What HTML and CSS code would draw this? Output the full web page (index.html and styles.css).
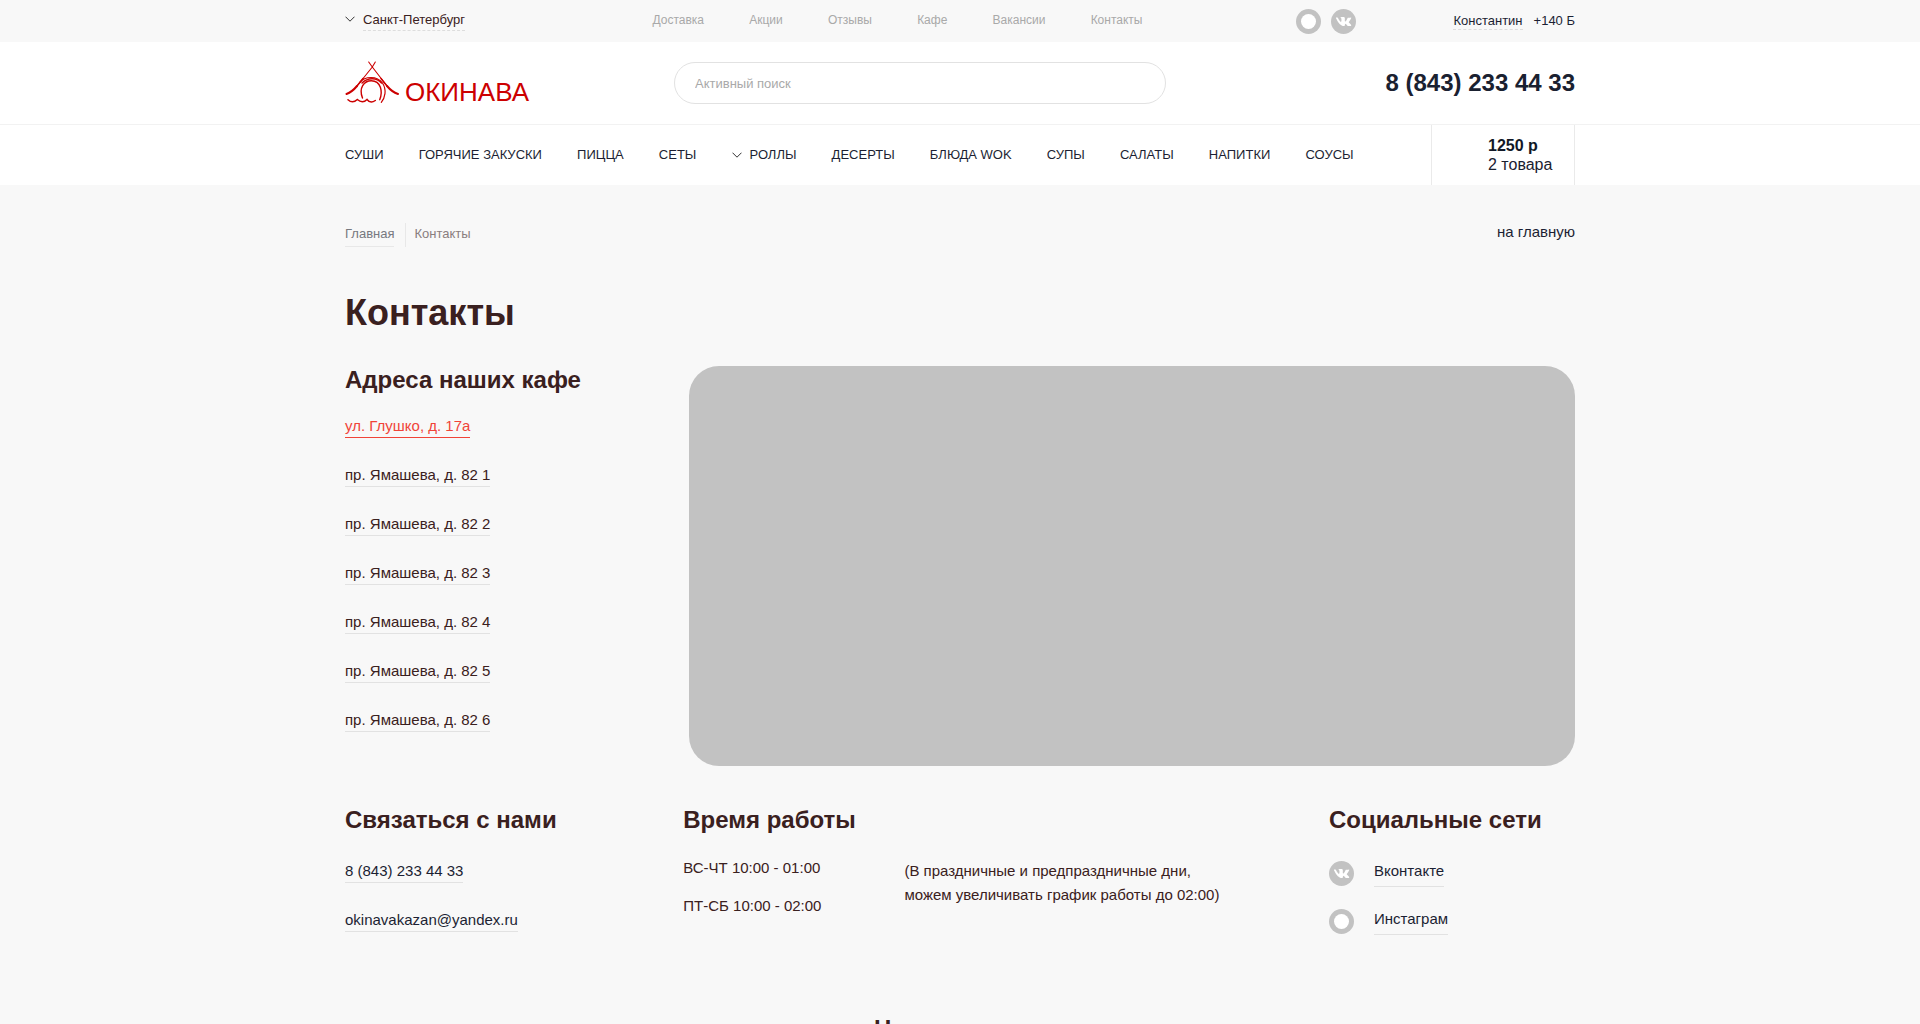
FILE: index.html
```html
<!DOCTYPE html>
<html lang="ru">
<head>
<meta charset="utf-8">
<meta name="viewport" content="width=device-width, initial-scale=1">
<title>Контакты</title>
<link rel="stylesheet" href="styles.css">
</head>
<body>
<svg class="sprite" aria-hidden="true">
  <symbol id="chevron" viewBox="0 0 10 6"><path d="M.5.7 5 5.200 9.500.7" fill="none" stroke="#333" stroke-width="1"/></symbol>
  <symbol id="ring" viewBox="0 0 25 25"><circle cx="12.500" cy="12.500" r="12.500" fill="#c2c2c2"/><circle cx="12.500" cy="12.500" r="7.500" fill="#fff"/></symbol>
  <symbol id="vk" viewBox="0 0 25 25"><circle cx="12.500" cy="12.500" r="12.500" fill="#c2c2c2"/><path transform="translate(5 8) scale(.625)" fill="#fff" d="M11.700 14.400h1.500s.4 0 .7-.4c.2-.2.2-.7.2-.7s0-2 .9-2.300c.9-.3 2.100 2 3.300 2.800.9.7 1.700.5 1.700.5l3.300 0s1.700-.1.9-1.500c-.1-.1-.5-1-2.400-2.800-2.100-1.900-1.800-1.600.7-4.900C24 3.100 24.600 1.900 24.400 1.300c-.2-.5-1.300-.3-1.300-.3l-3.700 0s-.3 0-.5.1c-.2.100-.3.4-.3.4s-.6 1.600-1.400 2.900c-1.600 2.800-2.300 2.900-2.600 2.800-.6-.4-.5-1.700-.5-2.600 0-2.900.4-4.100-.9-4.400C12.800.1 12.500 0 11.300 0 9.700 0 8.400 0 7.600.4c-.5.3-.9.8-.6.8.3 0 .9.200 1.300.6.4.6.4 1.900.4 1.900s.3 3.600-.6 4c-.6.4-1.500-.3-3.300-3.200C3.900 3 3.200 1.500 3.200 1.500S3 1.200 2.800 1C2.600.9 2.200.8 2.200.8H.6S.1.800-.1 1c-.2.200 0 .6 0 .6s2.800 6.300 5.900 9.500c2.900 2.900 5.900 3.300 5.900 3.300z"/></symbol>
</svg>

<header>
  <div class="topbar container">
    <button class="city" type="button"><svg class="chevron"><use href="#chevron"/></svg><span>Санкт-Петербург</span></button>
    <nav class="top-nav" aria-label="Информация">
      <a href="#">Доставка</a><a href="#">Акции</a><a href="#">Отзывы</a><a href="#">Кафе</a><a href="#">Вакансии</a><a href="#">Контакты</a>
    </nav>
    <div class="top-social">
      <a href="#" aria-label="Инстаграм"><svg class="round"><use href="#ring"/></svg></a>
      <a href="#" aria-label="Вконтакте"><svg class="round"><use href="#vk"/></svg></a>
    </div>
    <div class="user"><a href="#">Константин</a><span>+140 Б</span></div>
  </div>

  <div class="brand-row">
    <div class="container brand">
      <a class="logo" href="#">
        <svg viewBox="0 0 54 44" class="roof" aria-hidden="true">
          <g fill="none" stroke="#c00" stroke-linecap="round">
            <path d="M23.700 1 27.300 6 42 25M30.300 1 27.300 6 12 25" stroke-width="1.100"/>
            <path d="M36 17.500 42 25M18 17.500 12 25" stroke-width="1.500"/>
            <path d="M42 25Q47 31 53 33M12 25Q7 31 1.500 33" stroke-width="2"/>
            <path d="M14.700 21.500C20 15 32 14.500 37.500 22 42 29 40 37 36.300 41.300" stroke-width="1.200"/>
            <path d="M17 22C23 16 32 16.500 36.500 22" stroke-width="1.500"/>
            <path d="M17.500 37C13.500 27 19 19.700 26.300 19.700 36 19.700 38 31 34.700 38.700" stroke-width="1.400"/>
            <path d="M3 38.700Q7.500 43 12.300 38.500 17.500 43 22 38.500 25.500 43 30.300 39.500" stroke-width="1.500"/>
          </g>
        </svg>
        <span>ОКИНАВА</span>
      </a>
      <form class="search" role="search"><input type="search" placeholder="Активный поиск" aria-label="Активный поиск"></form>
      <a class="phone" href="tel:88432334433">8 (843) 233 44 33</a>
    </div>
  </div>

  <div class="menu-row">
    <div class="container menu-inner">
      <nav class="menu" aria-label="Меню">
        <a href="#">СУШИ</a><a href="#">ГОРЯЧИЕ ЗАКУСКИ</a><a href="#">ПИЦЦА</a><a href="#">СЕТЫ</a><a class="has-sub" href="#"><svg class="chevron"><use href="#chevron"/></svg>РОЛЛЫ</a><a href="#">ДЕСЕРТЫ</a><a href="#">БЛЮДА WOK</a><a href="#">СУПЫ</a><a href="#">САЛАТЫ</a><a href="#">НАПИТКИ</a><a href="#">СОУСЫ</a>
      </nav>
      <a class="cart" href="#"><b>1250 р</b><span>2 товара</span></a>
    </div>
  </div>
</header>

<main class="container">
  <div class="crumbs-row">
    <nav class="crumbs" aria-label="Навигация"><a href="#">Главная</a><span>Контакты</span></nav>
    <a class="home" href="#">на главную</a>
  </div>
  <h1>Контакты</h1>

  <section class="places">
    <div>
      <h2>Адреса наших кафе</h2>
      <ul class="links">
        <li><a class="active" href="#">ул. Глушко, д. 17а</a></li>
        <li><a href="#">пр. Ямашева, д. 82 1</a></li>
        <li><a href="#">пр. Ямашева, д. 82 2</a></li>
        <li><a href="#">пр. Ямашева, д. 82 3</a></li>
        <li><a href="#">пр. Ямашева, д. 82 4</a></li>
        <li><a href="#">пр. Ямашева, д. 82 5</a></li>
        <li><a href="#">пр. Ямашева, д. 82 6</a></li>
      </ul>
    </div>
    <div class="map"></div>
  </section>

  <section class="info">
    <div>
      <h2>Связаться с нами</h2>
      <ul class="links navy">
        <li><a href="tel:88432334433">8 (843) 233 44 33</a></li>
        <li><a href="mailto:okinavakazan@yandex.ru">okinavakazan@yandex.ru</a></li>
      </ul>
    </div>
    <div>
      <h2>Время работы</h2>
      <div class="hours">
        <div class="times"><p>ВС-ЧТ 10:00 - 01:00</p><p>ПТ-СБ 10:00 - 02:00</p></div>
        <p class="note">(В праздничные и предпраздничные дни,<br>можем увеличивать график работы до 02:00)</p>
      </div>
    </div>
    <div>
      <h2>Социальные сети</h2>
      <ul class="social">
        <li><svg class="round"><use href="#vk"/></svg><a href="#">Вконтакте</a></li>
        <li><svg class="round"><use href="#ring"/></svg><a href="#">Инстаграм</a></li>
      </ul>
    </div>
  </section>

  <h2 class="feedback">Напишите нам</h2>
</main>
</body>
</html>
```
FILE: styles.css
```css
*, *::before, *::after { box-sizing: border-box; }

body {
  margin: 0;
  background: #f8f8f8;
  color: #3a2020;
  font: 15px/20px "Liberation Sans", Arial, sans-serif;
}

a { color: inherit; text-decoration: none; }
h1, h2, p, ul { margin: 0; padding: 0; }
ul { list-style: none; }
button, input { font: inherit; color: inherit; }

.sprite { position: absolute; width: 0; height: 0; }
.container { width: 100%; max-width: 1230px; margin: 0 auto; }
.chevron { width: 10px; height: 6px; flex: none; }
.round { display: block; width: 25px; height: 25px; flex: none; }

/* Top bar */
.topbar {
  display: grid;
  grid-template-columns: 25% 40% 1fr auto;
  align-items: center;
  height: 42px;
  font-size: 13px;
}
.city {
  display: flex;
  align-items: center;
  justify-self: start;
  gap: 8px;
  padding: 0 0 1px;
  border: 0;
  background: none;
}
.city span { line-height: 20px; border-bottom: 1px dashed #ddd; }
.city .chevron { margin-bottom: 3px; }
.top-nav {
  display: flex;
  justify-content: space-between;
  padding: 0 2px 2px 0;
  color: #a9a9a9;
  font-size: 12px;
}
.top-social { display: flex; gap: 10px; padding-left: 151px; }
.user { display: flex; align-items: center; gap: 11px; color: #1c1f33; }
.user a { line-height: 16px; border-bottom: 1px dashed #ddd; }

/* Logo, search, phone */
.brand-row { background: #fff; border-bottom: 1px solid #f2f2f2; }
.brand {
  display: flex;
  align-items: center;
  height: 82px;
}
.logo {
  display: flex;
  align-items: flex-end;
  gap: 6px;
  width: 329px;
  color: #c00;
  font-size: 26px;
}
.logo span { line-height: 26px; }
.roof { width: 54px; height: 44px; }
.search { width: 40%; }
.search input {
  display: block;
  width: 100%;
  height: 42px;
  padding: 0 20px;
  border: 1px solid #e2e2e2;
  border-radius: 21px;
  background: #fff;
  font-size: 13px;
  outline: 0;
  appearance: none;
}
.search input::placeholder { color: #a9a9a9; opacity: 1; }
.phone {
  margin-left: auto;
  color: #1a2130;
  font-size: 24px;
  font-weight: bold;
}

/* Menu */
.menu-row { background: #fff; }
.menu-inner { display: flex; justify-content: space-between; height: 60px; }
.menu {
  display: flex;
  align-items: center;
  justify-content: space-between;
  width: 82%;
  color: #1c1f33;
  font-size: 13px;
}
.has-sub { display: flex; align-items: center; gap: 8px; }
.cart {
  display: flex;
  flex-direction: column;
  justify-content: center;
  width: 144px;
  padding-left: 56px;
  border: solid #eaeaea;
  border-width: 0 1px;
  color: #1a2130;
  font-size: 16px;
  line-height: 19px;
}
.cart b { color: #111827; }

/* Breadcrumbs */
.crumbs-row { display: flex; justify-content: space-between; padding-top: 38px; }
.crumbs { display: flex; font-size: 13px; line-height: 22px; color: #8a7e7e; }
.crumbs a { padding-bottom: 1px; border-bottom: 1px solid #e8e8e8; color: #777980; }
.crumbs span { margin-left: 11px; padding-left: 8px; border-left: 1px solid #e8e8e8; }
.home { line-height: 18px; color: #1c1f33; }

/* Content */
h1 { margin-top: 44px; font-size: 36px; line-height: 44px; }
h2 { font-size: 24px; line-height: 28px; }
.places { display: grid; grid-template-columns: 28% 72%; margin-top: 31px; }
.map { height: 400px; border-radius: 30px; background: #c2c2c2; }
.links { padding-top: 22px; }
.links li { height: 49px; }
.links a {
  display: inline-block;
  padding-bottom: 1px;
  border-bottom: 1px solid #e2e2e2;
}
.links .active { color: #f04438; border-color: #f04438; }
.navy { color: #1c1f33; }

.info { display: grid; grid-template-columns: 27.5% 52.5% 20%; margin-top: 40px; }
.info .links { padding-top: 27px; }
.hours { display: flex; gap: 83px; padding-top: 20px; }
.times { line-height: 28px; }
.times p + p { margin-top: 10px; }
.note { padding-top: 5px; line-height: 24px; }
.social { padding-top: 27px; color: #1c1f33; }
.social li { display: flex; gap: 20px; height: 48px; }
.social a { height: 26px; border-bottom: 1px solid #e2e2e2; }
.feedback { margin-top: 56px; padding-bottom: 60px; text-align: center; }
```
